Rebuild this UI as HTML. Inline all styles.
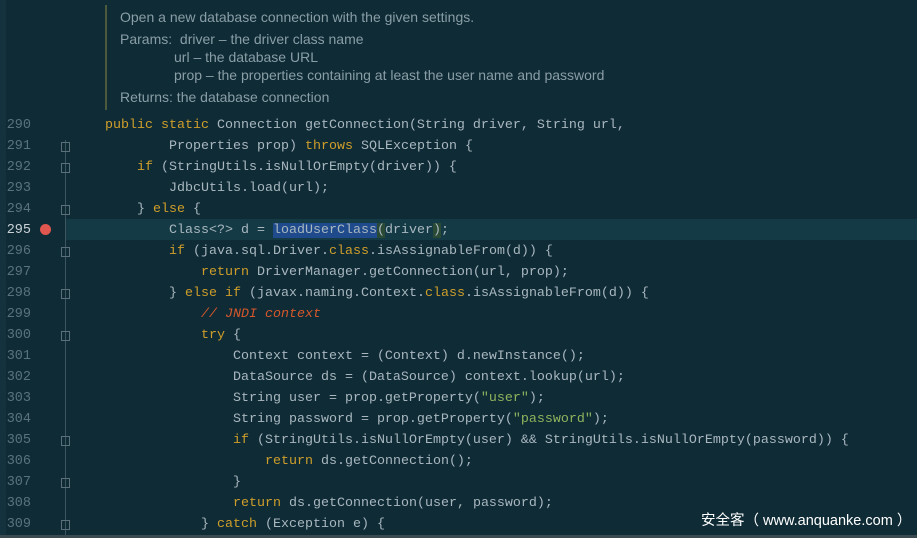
<!DOCTYPE html>
<html><head><meta charset="utf-8"><style>
body{margin:0;width:917px;height:538px;background:#0f2b36;overflow:hidden;position:relative;font-family:"Liberation Mono",monospace}
.gut{position:absolute;left:0;top:0;width:105px;height:538px;background:#0f2b36}
.edge{position:absolute;left:0;top:0;width:6px;height:538px;background:#13323d}
.cur{position:absolute;left:66px;top:219px;width:851px;height:21px;background:#143a46}
.ln{position:absolute;left:0;width:31px;text-align:right;font-size:13.5px;color:#5a727c;line-height:21px}
.code{position:absolute;left:105px;font-size:13.33px;color:#a9b7bf;line-height:21px;white-space:pre}
.k{color:#cf9e2a}.c{color:#d4572b;font-style:italic}.s{color:#8fb35c}
.doc{position:absolute;left:120px;font-family:"Liberation Sans",sans-serif;font-size:14px;color:#8a9ea6}
.fold{position:absolute;left:61px;width:9px;height:10px;border:1px solid #5a6f77;box-sizing:border-box}
.vl{position:absolute;left:65px;top:140px;width:1px;height:398px;background:#3d555e}
.sel{background:#1f4b8c}.m{background:#2a4a36}
.bar{position:absolute;left:105px;top:5px;width:2px;height:105px;background:#4c5a3c}
.wm{position:absolute;left:701px;top:509px;color:#fff;font-family:"Liberation Sans","Noto Sans CJK SC",sans-serif;font-size:14.5px}
.bot{position:absolute;left:0;top:535px;width:917px;height:3px;background:#3a4a50}
</style></head><body>
<div class="gut"></div><div class="edge"></div>
<div class="cur"></div>
<div class="bar"></div>
<div class="doc" style="top:9px">Open a new database connection with the given settings.</div>
<div class="doc" style="top:31px">Params:&nbsp; driver – the driver class name</div>
<div class="doc" style="top:49px;left:174px">url – the database URL</div>
<div class="doc" style="top:67px;left:174px">prop – the properties containing at least the user name and password</div>
<div class="doc" style="top:89px">Returns: the database connection</div>
<div class="vl"></div>
<div class="ln" style="top:115px">290</div><div class="ln" style="top:136px">291</div><div class="ln" style="top:157px">292</div><div class="ln" style="top:178px">293</div><div class="ln" style="top:199px">294</div><div class="ln" style="top:220px;color:#c9d2d6">295</div><div class="ln" style="top:241px">296</div><div class="ln" style="top:262px">297</div><div class="ln" style="top:283px">298</div><div class="ln" style="top:304px">299</div><div class="ln" style="top:325px">300</div><div class="ln" style="top:346px">301</div><div class="ln" style="top:367px">302</div><div class="ln" style="top:388px">303</div><div class="ln" style="top:409px">304</div><div class="ln" style="top:430px">305</div><div class="ln" style="top:451px">306</div><div class="ln" style="top:472px">307</div><div class="ln" style="top:493px">308</div><div class="ln" style="top:514px">309</div>
<div class="fold" style="top:142px"></div><div class="fold" style="top:163px"></div><div class="fold" style="top:205px"></div><div class="fold" style="top:247px"></div><div class="fold" style="top:289px"></div><div class="fold" style="top:331px"></div><div class="fold" style="top:436px"></div><div class="fold" style="top:478px"></div><div class="fold" style="top:520px"></div>
<div style="position:absolute;left:40px;top:224px;width:11px;height:11px;border-radius:50%;background:#e0574f"></div>
<div class="code" style="top:115px"><span class="k">public static</span> Connection getConnection(String driver, String url,
        Properties prop) <span class="k">throws</span> SQLException {
    <span class="k">if</span> (StringUtils.isNullOrEmpty(driver)) {
        JdbcUtils.load(url);
    } <span class="k">else</span> {
        Class&lt;?&gt; d = <span class="sel">loadUserClass</span><span class="m">(</span>driver<span class="m">)</span>;
        <span class="k">if</span> (java.sql.Driver.<span class="k">class</span>.isAssignableFrom(d)) {
            <span class="k">return</span> DriverManager.getConnection(url, prop);
        } <span class="k">else if</span> (javax.naming.Context.<span class="k">class</span>.isAssignableFrom(d)) {
            <span class="c">// JNDI context</span>
            <span class="k">try</span> {
                Context context = (Context) d.newInstance();
                DataSource ds = (DataSource) context.lookup(url);
                String user = prop.getProperty(<span class="s">"user"</span>);
                String password = prop.getProperty(<span class="s">"password"</span>);
                <span class="k">if</span> (StringUtils.isNullOrEmpty(user) &amp;&amp; StringUtils.isNullOrEmpty(password)) {
                    <span class="k">return</span> ds.getConnection();
                }
                <span class="k">return</span> ds.getConnection(user, password);
            } <span class="k">catch</span> (Exception e) {</div>
<div class="wm">安全客（ www.anquanke.com ）</div>
<div class="bot"></div>
</body></html>
